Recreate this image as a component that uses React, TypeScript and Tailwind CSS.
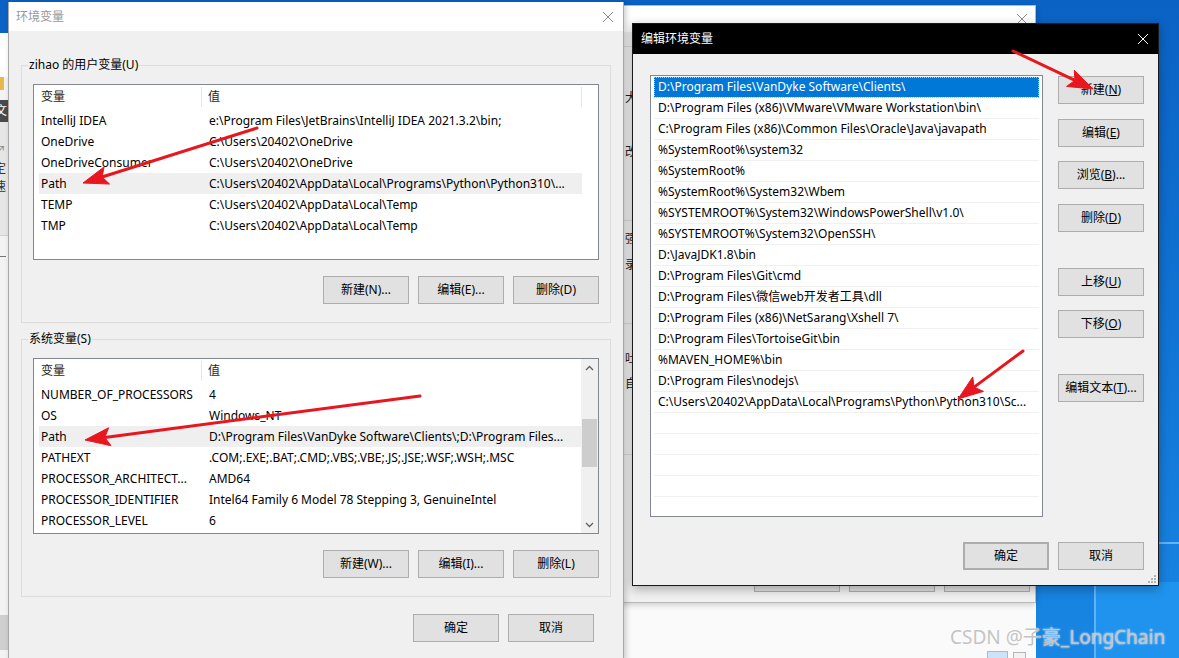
import React from 'react';

type Row = { name: string; value: string; active?: boolean };

const USER_VARS: Row[] = [
  { name: 'IntelliJ IDEA', value: 'e:\\Program Files\\JetBrains\\IntelliJ IDEA 2021.3.2\\bin;' },
  { name: 'OneDrive', value: 'C:\\Users\\20402\\OneDrive' },
  { name: 'OneDriveConsumer', value: 'C:\\Users\\20402\\OneDrive' },
  { name: 'Path', value: 'C:\\Users\\20402\\AppData\\Local\\Programs\\Python\\Python310\\...', active: true },
  { name: 'TEMP', value: 'C:\\Users\\20402\\AppData\\Local\\Temp' },
  { name: 'TMP', value: 'C:\\Users\\20402\\AppData\\Local\\Temp' },
];

const SYSTEM_VARS: Row[] = [
  { name: 'NUMBER_OF_PROCESSORS', value: '4' },
  { name: 'OS', value: 'Windows_NT' },
  { name: 'Path', value: 'D:\\Program Files\\VanDyke Software\\Clients\\;D:\\Program Files...', active: true },
  { name: 'PATHEXT', value: '.COM;.EXE;.BAT;.CMD;.VBS;.VBE;.JS;.JSE;.WSF;.WSH;.MSC' },
  { name: 'PROCESSOR_ARCHITECT...', value: 'AMD64' },
  { name: 'PROCESSOR_IDENTIFIER', value: 'Intel64 Family 6 Model 78 Stepping 3, GenuineIntel' },
  { name: 'PROCESSOR_LEVEL', value: '6' },
];

const PATH_ENTRIES = [
  'D:\\Program Files\\VanDyke Software\\Clients\\',
  'D:\\Program Files (x86)\\VMware\\VMware Workstation\\bin\\',
  'C:\\Program Files (x86)\\Common Files\\Oracle\\Java\\javapath',
  '%SystemRoot%\\system32',
  '%SystemRoot%',
  '%SystemRoot%\\System32\\Wbem',
  '%SYSTEMROOT%\\System32\\WindowsPowerShell\\v1.0\\',
  '%SYSTEMROOT%\\System32\\OpenSSH\\',
  'D:\\JavaJDK1.8\\bin',
  'D:\\Program Files\\Git\\cmd',
  'D:\\Program Files\\微信web开发者工具\\dll',
  'D:\\Program Files (x86)\\NetSarang\\Xshell 7\\',
  'D:\\Program Files\\TortoiseGit\\bin',
  '%MAVEN_HOME%\\bin',
  'D:\\Program Files\\nodejs\\',
  'C:\\Users\\20402\\AppData\\Local\\Programs\\Python\\Python310\\Sc...',
];

function CloseIcon({ color }: { color: string }) {
  return (
    <svg width="12" height="12" viewBox="0 0 12 12">
      <path d="M1 1L11 11M11 1L1 11" stroke={color} strokeWidth="1" fill="none" />
    </svg>
  );
}

function Button({ children, className = '' }: { children: React.ReactNode; className?: string }) {
  return (
    <div
      className={`w-[86px] h-[28px] shrink-0 border border-[#adadad] bg-[#e1e1e1] flex items-center justify-center text-[12px] text-black ${className}`}
    >
      {children}
    </div>
  );
}

function VarList({ rows, scroll }: { rows: Row[]; scroll?: boolean }) {
  return (
    <div className="h-[176px] border border-[#828790] bg-white flex mt-[11px]">
      <div className="flex-1 min-w-0">
        <div className="h-[24px] flex items-center text-[12px] text-[#1e1e1e]">
          <div className="w-[168px] pl-[7px] h-[20px] flex items-center border-r border-[#e5e5e5]">变量</div>
          <div className={`flex-1 pl-[6px] h-[20px] flex items-center ${scroll ? '' : 'border-r border-[#e5e5e5] mr-[16px]'}`}>值</div>
        </div>
        <div className="mt-[1px] ml-[5px] w-[543px]">
          {rows.map((r) => (
            <div key={r.name} className={`h-[21px] flex items-center text-[12px] text-black ${r.active ? 'bg-[#efefef]' : ''}`}>
              <div className="w-[170px] pl-[2px] truncate">{r.name}</div>
              <div className="flex-1 min-w-0 whitespace-nowrap overflow-hidden">{r.value}</div>
            </div>
          ))}
        </div>
      </div>
      {scroll && (
        <div className="w-[17px] bg-[#f0f0f0] flex flex-col items-center">
          <div className="h-[17px] flex items-center justify-center">
            <svg width="9" height="6" viewBox="0 0 9 6">
              <path d="M1 5L4.5 1.5L8 5" stroke="#606060" strokeWidth="1.3" fill="none" />
            </svg>
          </div>
          <div className="w-[15px] h-[48px] bg-[#cdcdcd] mt-[43px]" />
          <div className="flex-1" />
          <div className="h-[17px] flex items-center justify-center">
            <svg width="9" height="6" viewBox="0 0 9 6">
              <path d="M1 1L4.5 4.5L8 1" stroke="#606060" strokeWidth="1.3" fill="none" />
            </svg>
          </div>
        </div>
      )}
    </div>
  );
}

function GroupBox({ label, children, className = '' }: { label: string; children: React.ReactNode; className?: string }) {
  return (
    <div className={`border border-[#dcdcdc] px-[11px] pb-[18px] ${className}`}>
      <span className="block w-fit -mt-[9px] -ml-[5px] px-[1px] leading-[16px] bg-[#f0f0f0] text-[12px] text-black">{label}</span>
      {children}
    </div>
  );
}

function arrowHead(x1: number, y1: number, x2: number, y2: number) {
  const len = 25;
  const half = 9;
  const d = Math.hypot(x2 - x1, y2 - y1);
  const ux = (x2 - x1) / d;
  const uy = (y2 - y1) / d;
  const bx = x2 - ux * len;
  const by = y2 - uy * len;
  const nx = x2 - ux * len * 0.8;
  const ny = y2 - uy * len * 0.8;
  return {
    head: `${x2},${y2} ${bx - uy * half},${by + ux * half} ${nx},${ny} ${bx + uy * half},${by - ux * half}`,
    end: [nx, ny],
  };
}

function Arrows() {
  const arrows = [
    [257, 128, 83, 183],
    [420, 396, 85, 440],
    [1013, 51, 1093, 89],
    [1023, 351, 958, 399],
  ];
  return (
    <svg className="absolute inset-0 pointer-events-none" width="1179" height="658">
      {arrows.map(([x1, y1, x2, y2], i) => {
        const a = arrowHead(x1, y1, x2, y2);
        return (
          <g key={i} fill="#e8171f" stroke="#e8171f">
            <line x1={x1} y1={y1} x2={a.end[0]} y2={a.end[1]} strokeWidth="3" strokeLinecap="round" />
            <polygon points={a.head} strokeWidth="1" strokeLinejoin="round" />
          </g>
        );
      })}
    </svg>
  );
}

export default function App() {
  return (
    <div className="relative w-[1179px] h-[658px] overflow-hidden bg-gradient-to-b from-[#0a62c4] to-[#1986e4] [font-family:'Noto_Sans','Noto_Sans_CJK_SC',sans-serif]">
      {/* desktop logo glow */}
      <div className="absolute left-[1094px] top-[580px] w-[2px] h-[78px] bg-[#5fb4f5]" />
      <div className="absolute left-[1096px] top-[582px] w-[83px] h-[76px] bg-[#1f93ee]" />
      <div className="absolute left-[1158px] top-[542px] w-[21px] h-[2px] bg-[#5fb4f5]" />

      {/* window peeking out on the far left */}
      <div className="absolute left-0 top-[33px] w-[9px] h-[625px] bg-[#f3f3f3] overflow-hidden text-[12px]">
        <div className="h-[44px] bg-white" />
        <div className="h-[13px] w-[4px] bg-[#e6b94a]" />
        <div className="mt-[10px] h-[22px] bg-[#4a4a4a] text-white leading-[22px] -ml-[5px]">文</div>
        <div className="h-[113px] bg-[#e6e6e6] text-[#333] -ml-[6px] pt-[20px] leading-[18px]">
          <div className="text-[#888]">↗</div>
          <div>定</div>
          <div>速</div>
        </div>
        <div className="h-[1px] bg-[#d0d0d0]" />
        <div className="mt-[20px] h-[1px] w-[6px] bg-[#777]" />
        <div className="mt-[358px] h-[35px] bg-[#cfcfcf]" />
      </div>

      {/* windows behind the path editor */}
      <div className="absolute left-[560px] top-[5px] w-[476px] h-[653px] bg-[#fafafa] border-l border-[#d0d0d0]" />
      <div className="absolute left-[560px] top-[5px] w-[476px] h-[598px] bg-[#f0f0f0] border border-[#b9b9b9] shadow-[0_2px_6px_rgba(0,0,0,0.18)] overflow-hidden flex flex-col">
        <div className="h-[26px] bg-white flex items-center justify-end pr-[7px]">
          <CloseIcon color="#8a8a8a" />
        </div>
        <div className="text-[12px] text-[#222]">
          <div className="h-[1px] bg-[#d9d9d9] mt-[14px]" />
          <div className="ml-[64px] mt-[43px] leading-[16px]">大</div>
          <div className="ml-[64px] mt-[38px] leading-[16px]">改</div>
          <div className="h-[1px] bg-[#d9d9d9] mt-[60px]" />
          <div className="ml-[64px] mt-[10px] leading-[16px]">强</div>
          <div className="ml-[64px] mt-[10px] leading-[16px]">录</div>
          <div className="h-[1px] bg-[#d9d9d9] mt-[50px]" />
          <div className="ml-[64px] mt-[27px] leading-[16px]">吐</div>
          <div className="ml-[64px] mt-[9px] leading-[16px]">自</div>
          <div className="h-[1px] bg-[#d9d9d9] mt-[62px]" />
        </div>
        <div className="flex-1" />
        <div className="flex justify-end gap-[9px] pr-[5px] pb-[10px]">
          <div className="w-[86px] h-[22px] border border-[#adadad] bg-[#e1e1e1]" />
          <div className="w-[86px] h-[22px] border border-[#adadad] bg-[#e1e1e1]" />
          <div className="w-[86px] h-[22px] border border-[#adadad] bg-[#e1e1e1]" />
        </div>
      </div>

      {/* taskbar bits at the bottom */}
      <div className="absolute left-[987px] top-[651px] w-[21px] h-[10px] bg-[#cce4f7] border border-[#8ec3ec]" />
      <div className="absolute left-[1013px] top-[652px] w-[13px] h-[10px] border border-[#b5b5b5] bg-[#f3f3f3]" />

      {/* 环境变量 */}
      <div className="absolute left-[8px] top-[2px] w-[616px] h-[660px] bg-[#f0f0f0] border-x border-[#a8a8a8] shadow-[2px_0_6px_rgba(0,0,0,0.2)]">
        <div className="h-[29px] bg-white flex items-center justify-between pl-[7px] pr-[9px] text-[12px] text-[#999]">
          <span>环境变量</span>
          <CloseIcon color="#8a8a8a" />
        </div>
        <div className="pl-[12px] pr-[12px] pt-[34px]">
          <GroupBox label="zihao 的用户变量(U)">
            <VarList rows={USER_VARS} />
            <div className="flex justify-end gap-[9px] mt-[16px]">
              <Button>新建(N)...</Button>
              <Button>编辑(E)...</Button>
              <Button>删除(D)</Button>
            </div>
          </GroupBox>
          <GroupBox label="系统变量(S)" className="mt-[16px]">
            <VarList rows={SYSTEM_VARS} scroll />
            <div className="flex justify-end gap-[9px] mt-[16px]">
              <Button>新建(W)...</Button>
              <Button>编辑(I)...</Button>
              <Button>删除(L)</Button>
            </div>
          </GroupBox>
          <div className="flex justify-end gap-[9px] mt-[17px] pr-[17px]">
            <Button>确定</Button>
            <Button>取消</Button>
          </div>
        </div>
      </div>

      {/* 编辑环境变量 */}
      <div className="absolute left-[632px] top-[23px] w-[527px] h-[563px] bg-[#f0f0f0] border border-[#1a1a1a] shadow-[0_3px_10px_rgba(0,0,0,0.3)]">
        <div className="h-[30px] bg-black flex items-center justify-between pl-[8px] pr-[9px] text-[12px] text-white">
          <span>编辑环境变量</span>
          <CloseIcon color="#ffffff" />
        </div>
        <div className="flex pl-[17px] pt-[21px]">
          <div className="w-[393px] h-[442px] border border-[#828790] bg-white overflow-hidden">
            <div className="mx-[3px] mt-[1px]">
              {PATH_ENTRIES.map((p, i) => (
                <div
                  key={p}
                  className={`h-[21px] flex items-center pl-[4px] pr-[2px] text-[12px] whitespace-nowrap overflow-hidden border-b border-[#f0f0f0] ${
                    i === 0 ? 'bg-[#0078d7] text-white outline outline-1 outline-dotted outline-[#99c9ef] -outline-offset-1' : 'text-black'
                  }`}
                >
                  {p}
                </div>
              ))}
              {[0, 1, 2, 3, 4].map((i) => (
                <div key={i} className="h-[21px] border-b border-[#f0f0f0]" />
              ))}
            </div>
          </div>
          <div className="ml-[15px] pt-[1px] flex flex-col">
            <Button>新建(<u>N</u>)</Button>
            <Button className="mt-[15px]">编辑(<u>E</u>)</Button>
            <Button className="mt-[14px]">浏览(<u>B</u>)...</Button>
            <Button className="mt-[15px]">删除(<u>D</u>)</Button>
            <Button className="mt-[36px]">上移(<u>U</u>)</Button>
            <Button className="mt-[14px]">下移(<u>O</u>)</Button>
            <Button className="mt-[36px]">编辑文本(<u>T</u>)...</Button>
          </div>
        </div>
        <div className="flex justify-end gap-[9px] mt-[25px] pr-[14px]">
          <Button className="border-2 border-[#0078d7]">确定</Button>
          <Button>取消</Button>
        </div>
        <div className="absolute right-[2px] bottom-[2px] grid grid-cols-3 gap-[1px]">
          {[0, 0, 1, 0, 1, 1, 1, 1, 1].map((on, i) => (
            <div key={i} className={`w-[2px] h-[2px] ${on ? 'bg-[#b4b4b4]' : ''}`} />
          ))}
        </div>
      </div>

      <Arrows />

      <div className="absolute left-[950px] top-[624px] text-[19px] leading-[26px] text-[#c4c4c4] [text-shadow:0_0_2px_#fff] whitespace-nowrap">
        CSDN @子豪_LongChain
      </div>
    </div>
  );
}
